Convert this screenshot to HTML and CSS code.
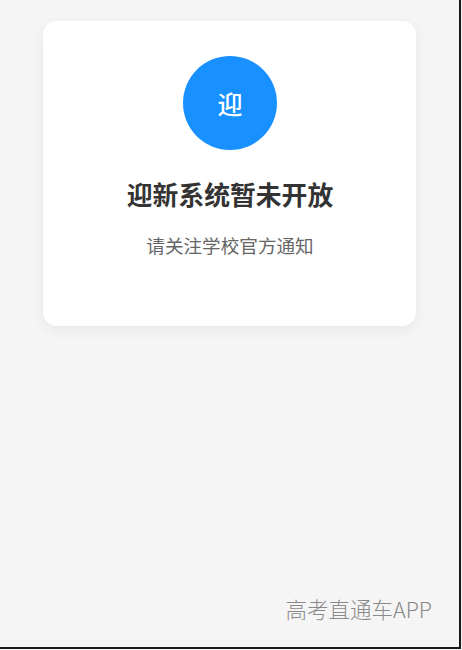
FILE: index.html
```html
<!DOCTYPE html>
<html lang="zh">
<head>
<meta charset="utf-8">
<link rel="stylesheet" href="styles.css">
</head>
<body>
<div class="frame">
  <main class="page">
    <section class="card">
      <div class="badge">迎</div>
      <h1 class="title">迎新系统暂未开放</h1>
      <p class="subtitle">请关注学校官方通知</p>
    </section>
  </main>
  <div class="watermark">高考直通车APP</div>
</div>
</body>
</html>
```
FILE: styles.css
```css
html, body {
  margin: 0;
  padding: 0;
  background: #f5f5f5;
}
body {
  width: 462px;
  height: 650px;
  overflow: hidden;
  font-family: "Noto Sans CJK SC", "Noto Sans", sans-serif;
}
.frame {
  box-sizing: border-box;
  width: 461px;
  height: 649px;
  border-right: 2px solid #1a1a1a;
  border-bottom: 2px solid #1a1a1a;
  display: flex;
  flex-direction: column;
  justify-content: space-between;
}
.page {
  padding: 21px 43px 0 43px;
}
.card {
  background: #fff;
  border-radius: 14px;
  box-shadow: 0 4px 14px rgba(0, 0, 0, 0.06);
  height: 305px;
  box-sizing: border-box;
  padding-top: 35px;
  padding-left: 1px;
  display: flex;
  flex-direction: column;
  align-items: center;
}
.badge {
  width: 94px;
  height: 94px;
  border-radius: 50%;
  background: #1890ff;
  color: #fff;
  font-size: 25px;
  font-weight: 500;
  display: flex;
  align-items: center;
  justify-content: center;
}
.title {
  margin: 26px 0 0;
  font-size: 25.8px;
  line-height: 36px;
  font-weight: 700;
  color: #333;
}
.subtitle {
  margin: 20px 0 0;
  font-size: 18.6px;
  line-height: 26px;
  color: #666;
}
.watermark {
  align-self: flex-end;
  margin: 0 27px 23px 0;
  font-size: 21.5px;
  line-height: 30px;
  color: #8a8a8a;
  font-weight: 300;
}
```
